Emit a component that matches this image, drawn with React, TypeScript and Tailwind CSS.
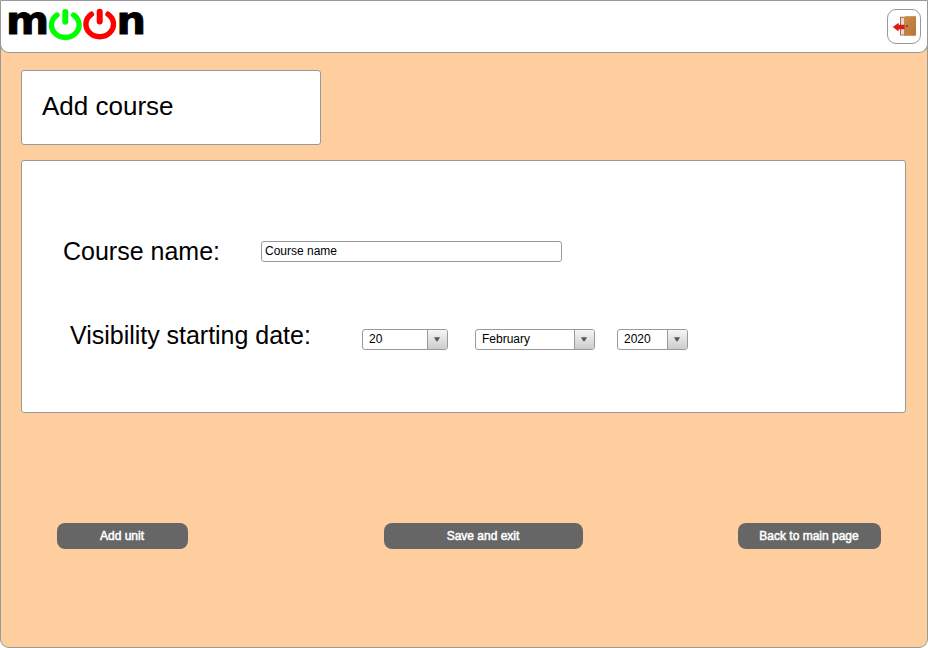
import React from "react";

function Logo() {
  return (
    <svg width="140" height="44" viewBox="0 0 140 44" className="mt-[2px] ml-[6px] block overflow-visible" aria-label="moon">
      <g fontFamily="'DejaVu Sans'" fontWeight="700" fontSize="37" fill="#000" stroke="#000" strokeWidth="0.9">
        <text transform="translate(-1.9 31.2) scale(1.12 1)">m</text>
        <text transform="translate(108.4 30.6) scale(1.12 1)">n</text>
      </g>
      <g fill="none" strokeLinecap="round">
        <g stroke="#00ff00">
          <path d="M49 12A13.8 12.5 0 1 0 65.6 12" strokeWidth="5.4" />
          <path d="M57.3 9V18.7" strokeWidth="6" />
        </g>
        <g stroke="#ff0000">
          <path d="M83.4 11.2A13.8 12.5 0 1 0 100 11.2" strokeWidth="5.4" />
          <path d="M91.7 8.8V18.6" strokeWidth="6" />
        </g>
      </g>
    </svg>
  );
}

function ExitButton() {
  return (
    <button
      aria-label="Exit"
      className="mt-[8px] mr-[6px] flex h-[35px] w-[34px] items-center justify-center rounded-[9px] border border-[#999] bg-white"
    >
      <svg width="32" height="33" viewBox="0 0 32 33">
        <defs>
          <linearGradient id="door" x1="0" x2="1" y1="0" y2="1">
            <stop offset="0" stopColor="#cc8a4c" />
            <stop offset="1" stopColor="#b87436" />
          </linearGradient>
        </defs>
        <rect x="12" y="6.8" width="15.5" height="18.7" fill="#b06a2c" />
        <rect x="13" y="7.8" width="4" height="16.8" fill="#d9dde0" />
        <path d="M16 8 17.2 6.2H28V25.4H17.2L16 26.2Z" fill="url(#door)" />
        <circle cx="19" cy="15.9" r="1" fill="#6b3b16" />
        <path d="M4.8 17 10.6 12.8V14.8H16.6V19.2H10.6V21.4Z" fill="#dc1a1a" />
      </svg>
    </button>
  );
}

function Select({ value, className }: { value: string; className: string }) {
  return (
    <div className={`flex h-[21px] overflow-hidden rounded-[3px] border border-[#999] bg-white ${className}`}>
      <span className="flex-1 pl-[6px] text-[12px] leading-[18px]">{value}</span>
      <span className="flex w-[20px] items-center justify-center border-l border-[#999] bg-linear-to-b from-[#f6f6f6] to-[#cccccc] pr-px">
        <svg width="6" height="5" viewBox="0 0 6 5">
          <path d="M0 .3H6L3.6 4.3H2.4Z" fill="#555" />
        </svg>
      </span>
    </div>
  );
}

function ActionButton({ label, className }: { label: string; className: string }) {
  return (
    <button
      className={`h-[26px] rounded-[8px] bg-[#666] pr-px text-center text-[12px] leading-[26px] text-white [-webkit-text-stroke:0.5px_white] ${className}`}
    >
      {label}
    </button>
  );
}

export default function App() {
  return (
    <div className="h-[648px] w-[928px] bg-white font-['Liberation_Sans',Arial,sans-serif] text-black">
      <div className="h-full overflow-hidden rounded-b-[9px] border border-[#999] bg-[#ffce9f]">
        <header className="-mx-px flex h-[52px] items-start justify-between rounded-b-[9px] border-x border-b border-[#999] bg-white pl-px">
          <Logo />
          <ExitButton />
        </header>

        <main className="pt-[17px] pl-[20px]">
          <section className="h-[75px] w-[300px] rounded-[3px] border border-[#999] bg-white pl-[20px]">
            <h1 className="text-[26px] leading-[70px]">Add course</h1>
          </section>

          <section className="mt-[15px] h-[253px] w-[885px] rounded-[3px] border border-[#999] bg-white pt-[75px]">
            <div className="flex h-[30px] items-start pl-[41px]">
              <label className="w-[198px] text-[25px] leading-[30px]">Course name:</label>
              <input
                className="mt-[5px] h-[21px] w-[301px] rounded-[3px] border border-[#999] bg-white pb-[1px] pl-[3px] text-[12px] leading-[18px]"
                defaultValue="Course name"
              />
            </div>
            <div className="mt-[54px] flex h-[30px] items-start pl-[48px]">
              <label className="w-[292px] text-[25px] leading-[30px] tracking-[-0.02px]">Visibility starting date:</label>
              <Select value="20" className="mt-[9px] w-[86px]" />
              <Select value="February" className="mt-[9px] ml-[27px] w-[120px]" />
              <Select value="2020" className="mt-[9px] ml-[22px] w-[71px]" />
            </div>
          </section>

          <div className="mt-[110px] flex pl-[36px]">
            <ActionButton label="Add unit" className="w-[131px]" />
            <ActionButton label="Save and exit" className="ml-[196px] w-[199px]" />
            <ActionButton label="Back to main page" className="ml-[155px] w-[143px]" />
          </div>
        </main>
      </div>
    </div>
  );
}
